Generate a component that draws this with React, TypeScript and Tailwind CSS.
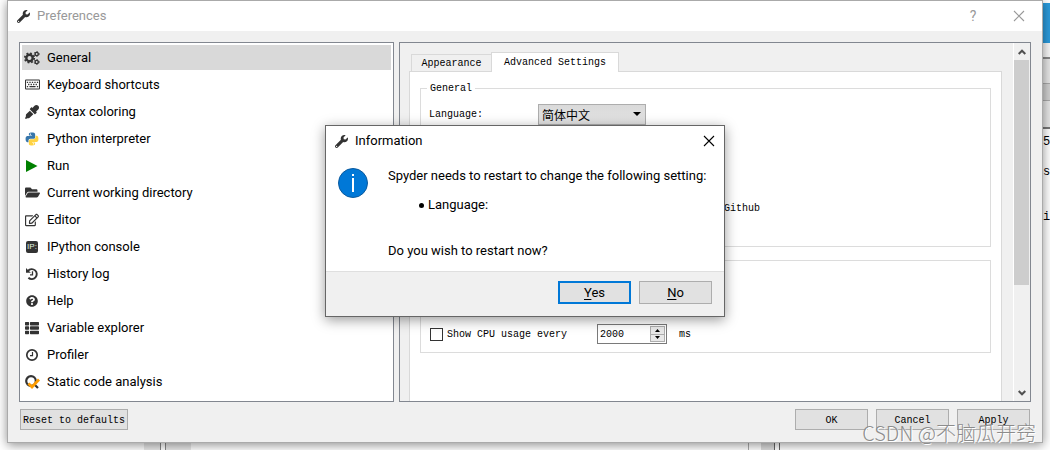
import React from "react";
import {
  FaWrench,
  FaRegKeyboard,
  FaEyeDropper,
  FaFolderOpen,
  FaRegEdit,
  FaQuestionCircle,
  FaThList,
} from "react-icons/fa";

const mono = "font-['Liberation_Mono','Noto_Sans_CJK_SC',monospace] text-[10px] leading-3";

function CogsIcon() {
  return (
    <svg viewBox="0 0 16 14" className="h-3.5 w-4" fill="none" stroke="#333">
      <circle cx="5.500" cy="7" r="3.200" strokeWidth="2.400" />
      <circle cx="5.500" cy="7" r="4.700" strokeWidth="1.800" strokeDasharray="1.850 1.841" />
      <circle cx="12.700" cy="3" r="1.600" strokeWidth="1.400" />
      <circle cx="12.700" cy="3" r="2.400" strokeWidth="1" strokeDasharray="1.250 1.263" />
      <circle cx="12.700" cy="11" r="1.600" strokeWidth="1.400" />
      <circle cx="12.700" cy="11" r="2.400" strokeWidth="1" strokeDasharray="1.250 1.263" />
    </svg>
  );
}

function PythonLogo() {
  return (
    <svg viewBox="0 0 24 24" className="size-3.5">
      <path
        fill="#3776ab"
        d="M11.9 1C6.3 1 6.7 3.4 6.7 3.4V6H12v.8H4.6S1 6.4 1 12s3.1 5.400 3.100 5.400H6v-2.600s-.1-3.100 3.100-3.100h5.300s3 0 3-2.900V4S17.800 1 11.900 1zM9 2.700a1 1 0 110 1.900 1 1 0 010-1.900z"
      />
      <path
        fill="#ffd343"
        d="M12.100 23c5.600 0 5.200-2.400 5.200-2.400V18H12v-.8h7.400S23 17.600 23 12s-3.100-5.400-3.100-5.400H18v2.600s.1 3.100-3.100 3.100H9.600s-3 0-3 2.900V20S6.200 23 12.100 23zM15 21.300a1 1 0 110-1.900 1 1 0 010 1.900z"
      />
    </svg>
  );
}

function RunIcon() {
  return (
    <svg viewBox="0 0 14 14" className="size-3.5">
      <path fill="#008000" d="M1 1l11.500 6L1 13z" />
    </svg>
  );
}

function IPythonIcon() {
  return (
    <span className="flex h-3 w-3 items-center justify-center rounded-xs bg-[#333] font-['Liberation_Sans',sans-serif] text-[8px] leading-3 text-[#e0f5e0]">
      IP:
    </span>
  );
}

function HistoryIcon() {
  return (
    <svg viewBox="0 0 14 14" className="size-3.5" fill="none" stroke="#333">
      <path d="M3 3.800A5 5 0 1 1 3.400 10.800" strokeWidth="1.900" />
      <path d="M1 1v4.800h4.800z" fill="#333" stroke="none" />
      <path d="M7.500 4.300v3.500H5" strokeWidth="1.300" />
    </svg>
  );
}

function ClockIcon() {
  return (
    <svg viewBox="0 0 14 14" className="size-3.5" fill="none" stroke="#333">
      <circle cx="7" cy="7" r="5.200" strokeWidth="1.700" />
      <path d="M7.500 4v3.600H5" strokeWidth="1.200" />
    </svg>
  );
}

function AnalysisIcon() {
  return (
    <svg viewBox="0 0 16 16" className="size-4" fill="none">
      <circle cx="7" cy="7" r="4.800" stroke="#333" strokeWidth="2.200" />
      <path d="M11 11l3 3" stroke="#333" strokeWidth="2.200" />
      <path d="M4.500 9.500l3.500 3.500 7-7.500" stroke="#ff9d00" strokeWidth="2.800" />
    </svg>
  );
}

const pages = [
  { label: "General", icon: <CogsIcon /> },
  { label: "Keyboard shortcuts", icon: <FaRegKeyboard size={15} /> },
  { label: "Syntax coloring", icon: <FaEyeDropper size={14} /> },
  { label: "Python interpreter", icon: <PythonLogo /> },
  { label: "Run", icon: <RunIcon /> },
  { label: "Current working directory", icon: <FaFolderOpen size={15} /> },
  { label: "Editor", icon: <FaRegEdit size={14} /> },
  { label: "IPython console", icon: <IPythonIcon /> },
  { label: "History log", icon: <HistoryIcon /> },
  { label: "Help", icon: <FaQuestionCircle size={12} /> },
  { label: "Variable explorer", icon: <FaThList size={14} /> },
  { label: "Profiler", icon: <ClockIcon /> },
  { label: "Static code analysis", icon: <AnalysisIcon /> },
];

function CloseIcon() {
  return (
    <svg viewBox="0 0 12 12" className="size-3" stroke="currentColor" strokeWidth="1.100">
      <path d="M1 1l10 10M11 1L1 11" />
    </svg>
  );
}

function PushButton({ children }: { children: React.ReactNode }) {
  return (
    <button
      type="button"
      className={`h-[21px] w-[73px] border border-[#adadad] bg-[#e1e1e1] pt-[3px] text-black ${mono}`}
    >
      {children}
    </button>
  );
}

function SpinBox({ label, value }: { label: string; value: string }) {
  return (
    <div className="flex h-5 w-[70px] items-center border border-[#7a7a7a] bg-white">
      <input
        aria-label={label}
        defaultValue={value}
        className={`min-w-0 flex-1 bg-transparent pt-px pl-[2px] text-black outline-none ${mono}`}
      />
      <div className="mr-px flex h-4 w-[15px] flex-col border border-[#adadad] bg-[#e8e8e8]">
        <button type="button" aria-label="Increase" className="flex flex-1 items-center justify-center border-b border-[#adadad]">
          <svg viewBox="0 0 5 3" className="h-[3px] w-[5px]"><path d="M0 3h5L2.500 0z" /></svg>
        </button>
        <button type="button" aria-label="Decrease" className="flex flex-1 items-center justify-center">
          <svg viewBox="0 0 5 3" className="h-[3px] w-[5px]"><path d="M0 0h5L2.500 3z" /></svg>
        </button>
      </div>
    </div>
  );
}

function PageList() {
  return (
    <ul className="flex w-[375px] shrink-0 flex-col gap-[2px] border border-[#828790] bg-white p-[2px]">
      {pages.map((page, i) => (
        <li key={page.label}>
          <button
            type="button"
            className={`flex h-[25px] w-full items-center gap-[7px] pl-[2px] text-left text-black ${i === 0 ? "bg-[#d9d9d9]" : ""}`}
          >
            <span className="flex w-4 justify-center text-[#333]">{page.icon}</span>
            {page.label}
          </button>
        </li>
      ))}
    </ul>
  );
}

function SettingsPane() {
  return (
    <section className={`flex h-[360px] min-w-0 flex-1 border border-[#828790] text-black ${mono}`}>
      <div className="flex min-w-0 flex-1 flex-col pt-[9px] pr-[11px] pl-[9px]">
        <div role="tablist" className="flex items-end pl-[2px]">
          <button role="tab" type="button" className="h-[17px] w-20 border border-r-0 border-b-0 border-[#d9d9d9] pt-px">
            Appearance
          </button>
          <button role="tab" type="button" aria-selected="true" className="relative z-10 -mb-px h-5 w-32 border border-b-0 border-[#d9d9d9] bg-white pt-px">
            Advanced Settings
          </button>
        </div>
        <div className="flex min-h-0 flex-1 flex-col gap-[13px] border border-b-0 border-[#d9d9d9] bg-white px-[10px] pt-[9px]">
          <fieldset className="h-[166px] border border-[#dcdcdc] pr-2 pl-[6px]">
            <legend className="px-[3px] pt-[2px]">General</legend>
            <div className="flex h-[33px] items-center pt-[6px] pl-[2px]">
              <label htmlFor="language" className="w-[109px]">Language:</label>
              <div className="relative">
                <select
                  id="language"
                  className="h-[21px] w-[108px] appearance-none border border-[#adadad] bg-linear-to-b from-[#dadada] to-[#e3e3e3] pl-[3px] font-['Noto_Sans_CJK_SC',sans-serif] text-xs leading-4"
                >
                  <option>简体中文</option>
                </select>
                <svg viewBox="0 0 8 4" className="pointer-events-none absolute top-2 right-[5px] h-1 w-2">
                  <path d="M0 0h8L4 4z" />
                </svg>
              </div>
            </div>
            <p className="pt-[75px] pl-[297px]">Github</p>
          </fieldset>
          <fieldset className="h-[93px] border border-[#dcdcdc] pl-[9px]">
            <div className="flex flex-col gap-[7px] pt-[36px]">
              <div className="pl-[167px]">
                <SpinBox label="Memory usage interval" value="2000" />
              </div>
              <div className="flex items-center">
                <label className="flex w-[167px] items-center gap-1">
                  <input type="checkbox" className="size-[13px] appearance-none border border-[#333] bg-white" />
                  <span className="pt-px">Show CPU usage every</span>
                </label>
                <SpinBox label="CPU usage interval" value="2000" />
                <span className="pt-px pl-3">ms</span>
              </div>
            </div>
          </fieldset>
        </div>
      </div>
      <div className="flex w-[17px] flex-col border-l border-white bg-[#f0f0f0]">
        <button type="button" aria-label="Scroll up" className="flex h-[17px] items-center justify-center">
          <svg viewBox="0 0 8 6" className="h-[6px] w-2" fill="none" stroke="#505050" strokeWidth="2"><path d="M.7 5L4 1.700 7.300 5" /></svg>
        </button>
        <div className="mr-px h-[225px] bg-[#cdcdcd]" />
        <button type="button" aria-label="Scroll down" className="mt-auto flex h-[17px] items-center justify-center">
          <svg viewBox="0 0 8 6" className="h-[6px] w-2" fill="none" stroke="#505050" strokeWidth="2"><path d="M.7 1L4 4.300 7.300 1" /></svg>
        </button>
      </div>
    </section>
  );
}

function InformationDialog() {
  return (
    <div
      role="dialog"
      aria-label="Information"
      className="absolute top-[125px] left-1/2 z-20 w-[400px] -translate-x-1/2 border border-[#666] bg-white text-black shadow-[0_3px_12px_rgba(0,0,0,0.4)]"
    >
      <header className="flex h-[30px] items-center gap-[7px] pr-[9px] pl-[9px]">
        <FaWrench size={13} className="text-[#333]" />
        <h2 className="flex-1">Information</h2>
        <button type="button" aria-label="Close"><CloseIcon /></button>
      </header>
      <div className="flex h-[115px] gap-5 pt-3 pl-3">
        <svg viewBox="0 0 30 30" className="size-[30px] shrink-0">
          <circle cx="15" cy="15" r="14.500" fill="#0078d7" stroke="#0b5a9e" />
          <path d="M14 6h2v2h-2zM14 10h2v14h-2z" fill="#fff" />
        </svg>
        <div className="leading-4 whitespace-nowrap">
          <p>Spyder needs to restart to change the following setting:</p>
          <ul className="pt-[13px] pl-[31px]">
            <li className="flex items-center gap-1">
              <span className="size-[5px] rounded-full bg-black" />
              Language:
            </li>
          </ul>
          <p className="pt-[30px]">Do you wish to restart now?</p>
        </div>
      </div>
      <footer className="flex h-[45px] justify-end gap-2 border-t border-[#dfdfdf] bg-[#f0f0f0] pt-[9px] pr-3">
        <button type="button" className="h-[23px] w-[73px] border-2 border-[#0078d7] bg-[#e1e1e1]">
          <u className="underline-offset-2">Y</u>es
        </button>
        <button type="button" className="h-[23px] w-[73px] border border-[#adadad] bg-[#e1e1e1]">
          <u className="underline-offset-2">N</u>o
        </button>
      </footer>
    </div>
  );
}

function EditorEdge() {
  return (
    <div className="flex w-[7px] shrink-0 flex-col overflow-hidden bg-white font-['Liberation_Mono',monospace] text-xs leading-4 text-black">
      <div className="mt-[3px] h-10 bg-[#2b9bdc]" />
      <div className="h-[14px] bg-[#f7f7f7]" />
      <div className="h-[26px] border-t-2 border-[#888] bg-[#e6e6e6]" />
      <div className="h-[18px] border-y border-[#aaa] bg-[#d0d0d0]" />
      <div className="h-7 border-b-2 border-[#777] bg-[#e6e6e6]" />
      <span className="pt-[5px]">5</span>
      <span className="pt-[14px]">s</span>
      <span className="pt-[29px]">i</span>
    </div>
  );
}

export default function App() {
  return (
    <div className="relative flex min-h-screen flex-col overflow-hidden bg-white font-[Roboto,'Noto_Sans_CJK_SC',sans-serif] text-[13px] leading-4">
      <div className="flex">
        <div className="w-[7px] shrink-0 bg-white" />
        <main className="relative z-10 flex min-w-0 flex-1 flex-col border border-[#aaa] bg-[#f0f0f0] shadow-[0_2px_10px_rgba(0,0,0,0.45)]">
          <header className="flex h-[30px] items-center gap-[7px] bg-white pr-[17px] pl-[9px]">
            <FaWrench size={13} className="text-[#333]" />
            <h1 className="flex-1 text-[#999]">Preferences</h1>
            <button type="button" aria-label="What's this?" className="mr-[27px] w-3 text-center text-sm leading-4 text-[#999]">?</button>
            <button type="button" aria-label="Close" className="text-[#999]"><CloseIcon /></button>
          </header>
          <div className="flex gap-[5px] pt-[11px] pr-[11px] pl-[11px]">
            <PageList />
            <SettingsPane />
          </div>
          <footer className="flex gap-2 pt-[7px] pr-3 pb-3 pl-3">
            <button
              type="button"
              className={`mr-auto h-[21px] w-[108px] border border-[#adadad] bg-[#e1e1e1] pt-[3px] whitespace-nowrap text-black ${mono}`}
            >
              Reset to defaults
            </button>
            <PushButton>OK</PushButton>
            <PushButton>Cancel</PushButton>
            <PushButton>Apply</PushButton>
          </footer>
        </main>
        <EditorEdge />
      </div>
      <div className="flex flex-1">
        <div className="w-36" />
        <div className="w-[17px] border-r border-[#888] bg-[#e8e8e8]" />
        <div className="w-[5px] border-r border-[#888]" />
        <div className="w-[25px] bg-[#e8e8e8]" />
        <div className="flex-1" />
        <div className="w-[13px] border-l border-[#aaa]" />
        <div className="w-[13px] bg-[#dcdcdc]" />
        <div className="w-[6px] border-x border-[#666]" />
        <div className="w-[270px]" />
      </div>
      <InformationDialog />
      <p className="absolute right-[14px] bottom-[3px] z-10 font-['Noto_Sans_CJK_SC',sans-serif] text-xl leading-7 font-light text-[#8c8c8c] [text-shadow:1px_1px_0_#fff]">
        CSDN @不脑瓜开窍
      </p>
    </div>
  );
}
